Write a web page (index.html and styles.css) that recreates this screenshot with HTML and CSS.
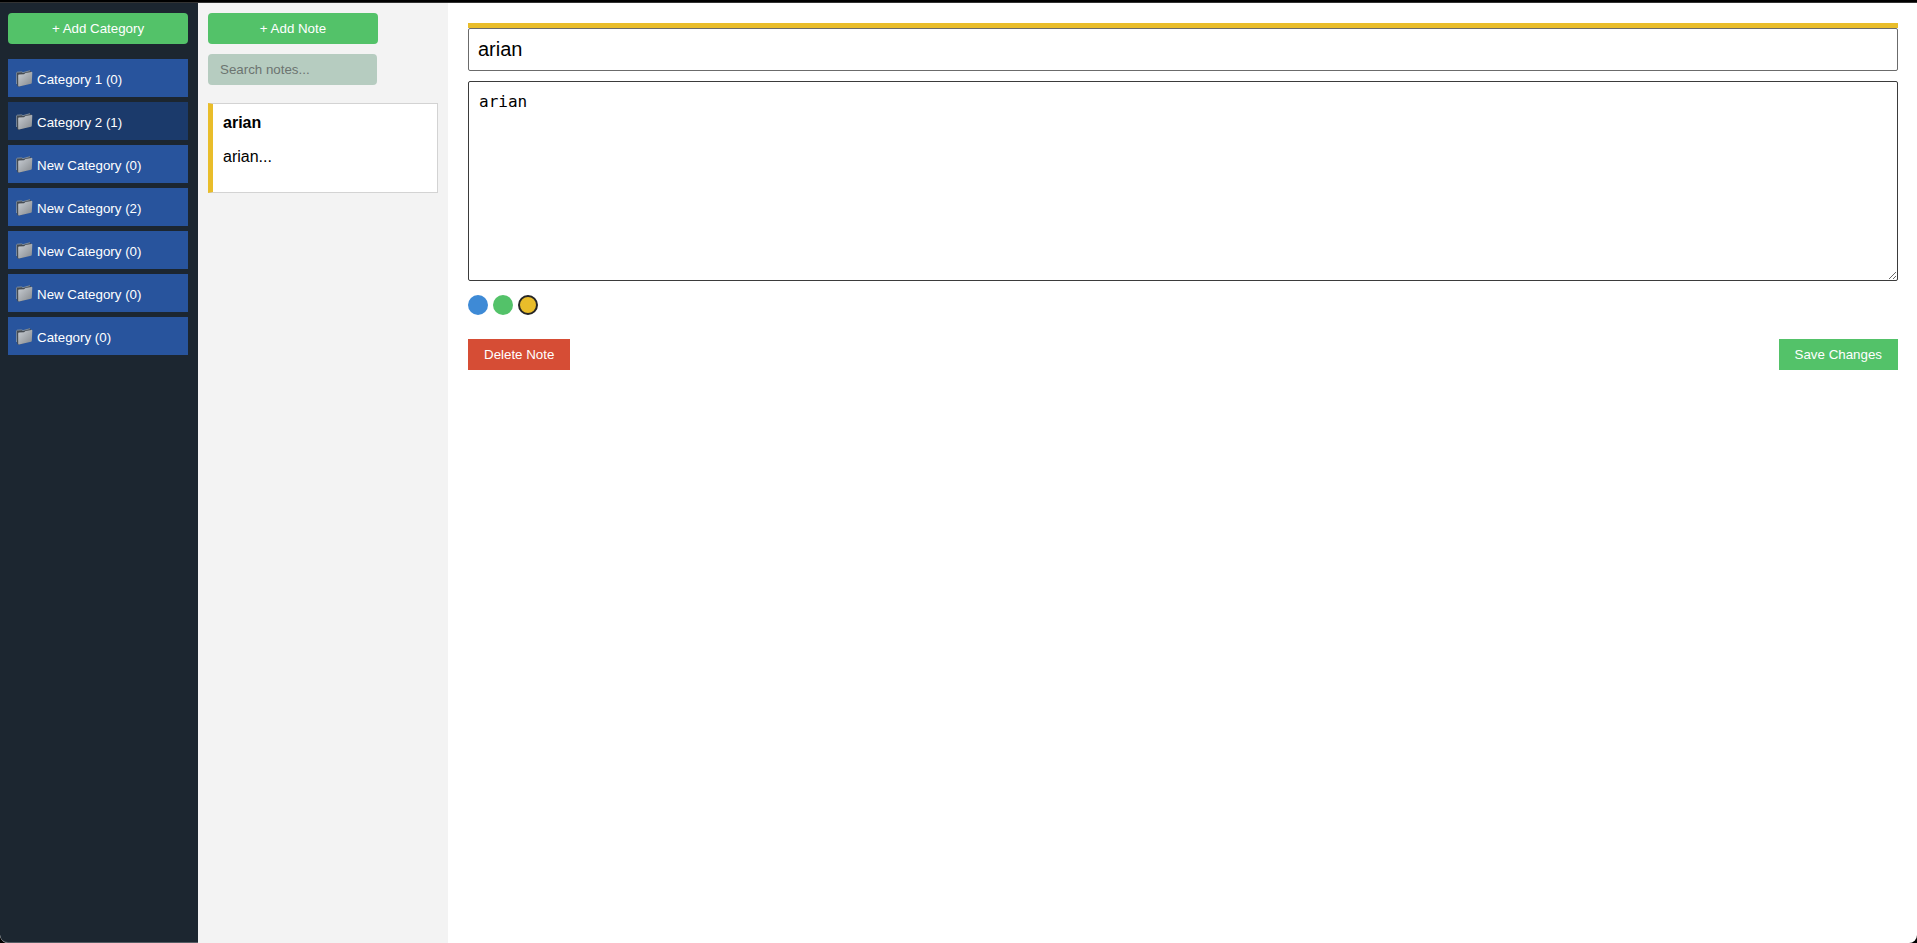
FILE: index.html
```html
<!DOCTYPE html>
<html lang="en">
<head>
<meta charset="utf-8">
<title>Notes</title>
<link rel="stylesheet" href="styles.css">
</head>
<body>
<svg class="defs" aria-hidden="true">
  <defs>
    <linearGradient id="front" x1="0" y1="0" x2="1" y2="1">
      <stop offset="0" stop-color="#c9ced4"/>
      <stop offset="1" stop-color="#85898d"/>
    </linearGradient>
    <symbol id="folder" viewBox="0 0 17 18">
      <path d="M0.200 3 L1 2.200 L5.500 1.800 L7 2.400 L13.500 0.500 L15 1.500 L14.500 13 L2.800 16.800 L1.200 16Z" fill="#454b52"/>
      <path d="M0.500 14 L0.300 3 L1.200 2.200 L5.500 1.900 L7 2.600 L14 0.700" fill="none" stroke="#8d9aaa" stroke-width="0.800"/>
      <path d="M2.200 5.400 Q2.200 4.700 3 4.600 L8 4.300 L9.500 3 L15.400 1.900 Q16.400 1.700 16.300 2.700 L15.800 12.700 Q15.700 13.500 15 13.700 L3 16.400 Q2.200 16.500 2.200 15.700Z" fill="url(#front)"/>
    </symbol>
  </defs>
</svg>
<div class="app">
  <nav class="sidebar">
    <button class="button add-category" type="button">+ Add Category</button>
    <ul class="categories">
      <li><button class="category" type="button"><svg class="folder"><use href="#folder"/></svg>Category 1 (0)</button></li>
      <li><button class="category active" type="button"><svg class="folder"><use href="#folder"/></svg>Category 2 (1)</button></li>
      <li><button class="category" type="button"><svg class="folder"><use href="#folder"/></svg>New Category (0)</button></li>
      <li><button class="category" type="button"><svg class="folder"><use href="#folder"/></svg>New Category (2)</button></li>
      <li><button class="category" type="button"><svg class="folder"><use href="#folder"/></svg>New Category (0)</button></li>
      <li><button class="category" type="button"><svg class="folder"><use href="#folder"/></svg>New Category (0)</button></li>
      <li><button class="category" type="button"><svg class="folder"><use href="#folder"/></svg>Category (0)</button></li>
    </ul>
  </nav>
  <section class="notes">
    <button class="button add-note" type="button">+ Add Note</button>
    <input class="search" type="search" placeholder="Search notes..." aria-label="Search notes">
    <article class="note">
      <h2 class="note-title">arian</h2>
      <p class="note-text">arian...</p>
    </article>
  </section>
  <main class="editor">
    <div class="title-wrap">
      <input class="title" type="text" value="arian" aria-label="Note title">
    </div>
    <textarea class="content" aria-label="Note content">arian</textarea>
    <div class="colors">
      <button class="color blue" type="button" aria-label="Blue"></button>
      <button class="color green" type="button" aria-label="Green"></button>
      <button class="color yellow selected" type="button" aria-label="Yellow"></button>
    </div>
    <div class="actions">
      <button class="button delete" type="button">Delete Note</button>
      <button class="button save" type="button">Save Changes</button>
    </div>
  </main>
</div>
</body>
</html>
```
FILE: styles.css
```css
* {
  box-sizing: border-box;
}

body {
  margin: 0;
  background: #000;
  font-family: "Liberation Sans", Arial, sans-serif;
  font-size: 16px;
}

button,
input {
  font-family: inherit;
}

.defs {
  position: absolute;
  width: 0;
  height: 0;
}

.app {
  display: flex;
  min-height: 100vh;
  border-top: 2px solid #000;
  border-radius: 0 0 8px 8px;
  overflow: hidden;
  background: #fff;
}

.sidebar {
  width: 198px;
  flex: none;
  padding: 10px 10px 10px 8px;
  border-top: 1px solid #333;
  border-bottom: 1px solid #555c64;
  border-bottom-left-radius: 8px;
  background: #1c2630;
}

.button {
  height: 31px;
  padding: 0 16px;
  border: 0;
  background: #53c269;
  color: #fff;
}

.add-category {
  width: 100%;
  border-radius: 4px;
}

.categories {
  display: grid;
  gap: 5px;
  margin: 15px 0 0;
  padding: 0;
  list-style: none;
}

.category {
  display: flex;
  align-items: center;
  gap: 4px;
  width: 100%;
  height: 38px;
  padding: 3px 8px 0;
  border: 0;
  background: #28549d;
  color: #fff;
  text-align: left;
}

.category.active {
  background: #1b3a6b;
}

.folder {
  width: 17px;
  height: 18px;
  margin-bottom: 2px;
}

.notes {
  display: flex;
  flex-direction: column;
  align-items: flex-start;
  width: 250px;
  flex: none;
  padding: 10px;
  border-top: 1px solid #333;
  background: #f3f3f3;
}

.add-note {
  width: 170px;
  border-radius: 4px;
}

.search {
  width: 169px;
  height: 31px;
  margin: 10px 0 18px;
  padding: 0 12px;
  border: 0;
  border-radius: 4px;
  background: #b6ccc0;
  appearance: none;
}

.search::placeholder {
  color: #6c7470;
}

.note {
  width: 100%;
  height: 90px;
  padding: 10px;
  border: 1px solid #d3d3d3;
  border-left: 5px solid #e9bd2a;
  background: #fff;
}

.note-title,
.note-text {
  margin: 0;
  font-size: 16px;
  line-height: 18px;
}

.note-text {
  margin-top: 16px;
}

.editor {
  flex: 1;
  min-width: 0;
  padding: 20px 19px 20px 20px;
  border-top: 1px solid #333;
}

.title-wrap {
  border-top: 5px solid #e9bd2a;
}

.title {
  display: block;
  width: 100%;
  height: 43px;
  padding: 0 9px;
  border: 1px solid #6b6b6b;
  border-radius: 2px;
  background: #fff;
  color: #000;
  font-size: 20px;
}

.content {
  display: block;
  width: 100%;
  height: 200px;
  margin-top: 10px;
  padding: 10px;
  border: 1px solid #3b3b3b;
  border-radius: 2px;
  background: #fff;
  color: #000;
  font-family: "DejaVu Sans Mono", Menlo, monospace;
  font-size: 16px;
}

.colors {
  display: flex;
  gap: 5px;
  margin-top: 14px;
}

.color {
  width: 20px;
  height: 20px;
  padding: 0;
  border: 0;
  border-radius: 50%;
}

.blue {
  background: #3e8ad6;
}

.green {
  background: #53c269;
}

.yellow {
  background: #e9bd2a;
}

.selected {
  border: 2px solid #262626;
}

.actions {
  display: flex;
  justify-content: space-between;
  margin-top: 24px;
}

.delete {
  background: #d64d35;
}
```
